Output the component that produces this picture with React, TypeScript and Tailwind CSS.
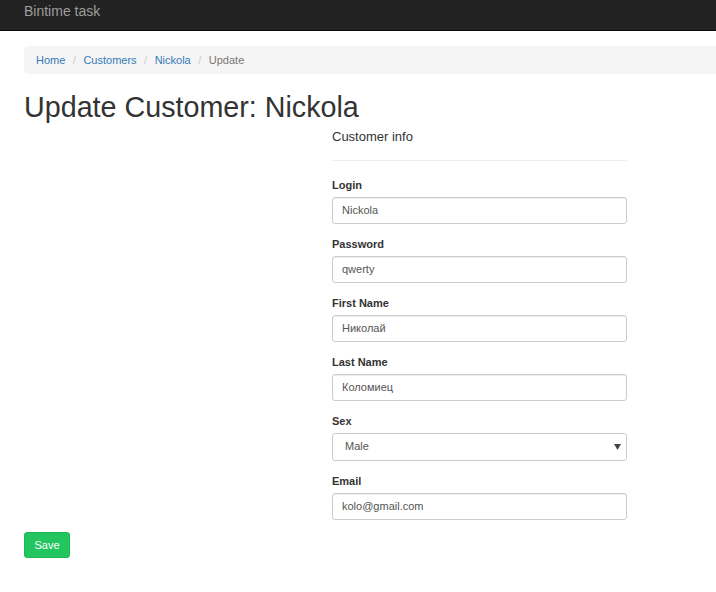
import React from 'react'

const fields = [
  { label: 'Login', value: 'Nickola' },
  { label: 'Password', value: 'qwerty' },
  { label: 'First Name', value: 'Николай' },
  { label: 'Last Name', value: 'Коломиец' },
]

function Field({ label, children }: { label: string; children: React.ReactNode }) {
  return (
    <div className="mb-[12px]">
      <label className="block text-[11px] leading-[16px] font-bold text-[#333] mb-[4px]">{label}</label>
      {children}
    </div>
  )
}

function TextInput({ value }: { value: string }) {
  return (
    <input
      defaultValue={value}
      className="block w-full h-[27px] pl-[9px] pr-[10px] pb-[2px] text-[11px] text-[#555] bg-white border border-[#ccc] rounded-[3px] shadow-[inset_0_1px_1px_rgba(0,0,0,0.075)] outline-none"
    />
  )
}

export default function App() {
  return (
    <div className="min-h-[592px] bg-white text-[#333] font-['Liberation_Sans',Arial,sans-serif]">
      <nav className="h-[31px] bg-[#222] border-b border-[#080808] px-6">
        <span className="block pt-[1px] text-[14px] leading-[20px] text-[#9d9d9d]">Bintime task</span>
      </nav>

      <div className="pl-6">
        <ol className="mt-[15px] h-[28px] flex items-center pl-3 bg-[#f5f5f5] rounded-l-[4px] text-[11px]">
          <li><a className="text-[#337ab7]">Home</a></li>
          <li className="mx-[7.5px] text-[#ccc]">/</li>
          <li><a className="text-[#337ab7]">Customers</a></li>
          <li className="mx-[7.5px] text-[#ccc]">/</li>
          <li><a className="text-[#337ab7]">Nickola</a></li>
          <li className="mx-[7.5px] text-[#ccc]">/</li>
          <li className="text-[#777]">Update</li>
        </ol>

        <h1 className="mt-[18px] text-[28.7px] leading-[31px] font-normal text-[#333]">Update Customer: Nickola</h1>

        <div className="flex mt-[5px]">
          <div className="w-[308px] shrink-0" />
          <div className="w-[295px]">
            <div className="text-[13px] leading-[18px] text-[#333]">Customer info</div>
            <hr className="mt-[14px] mb-[16px] border-0 border-t border-[#eee]" />

            {fields.map(f => (
              <Field key={f.label} label={f.label}>
                <TextInput value={f.value} />
              </Field>
            ))}

            <Field label="Sex">
              <div className="flex items-center justify-between h-[28px] pl-[12px] pr-[5px] pb-px text-[11px] text-[#555] bg-white border border-[#ccc] rounded-[3px]">
                <span>Male</span>
                <svg width="7" height="6" viewBox="0 0 7 6">
                  <path d="M0 0 H7 L3.5 6 Z" fill="#444" />
                </svg>
              </div>
            </Field>

            <Field label="Email">
              <TextInput value="kolo@gmail.com" />
            </Field>
          </div>
        </div>

        <button className="-mt-px h-[26px] w-[46px] text-[11px] text-white bg-[#22c55e] border border-[#1eb653] rounded-[3px]">
          Save
        </button>
      </div>
    </div>
  )
}
